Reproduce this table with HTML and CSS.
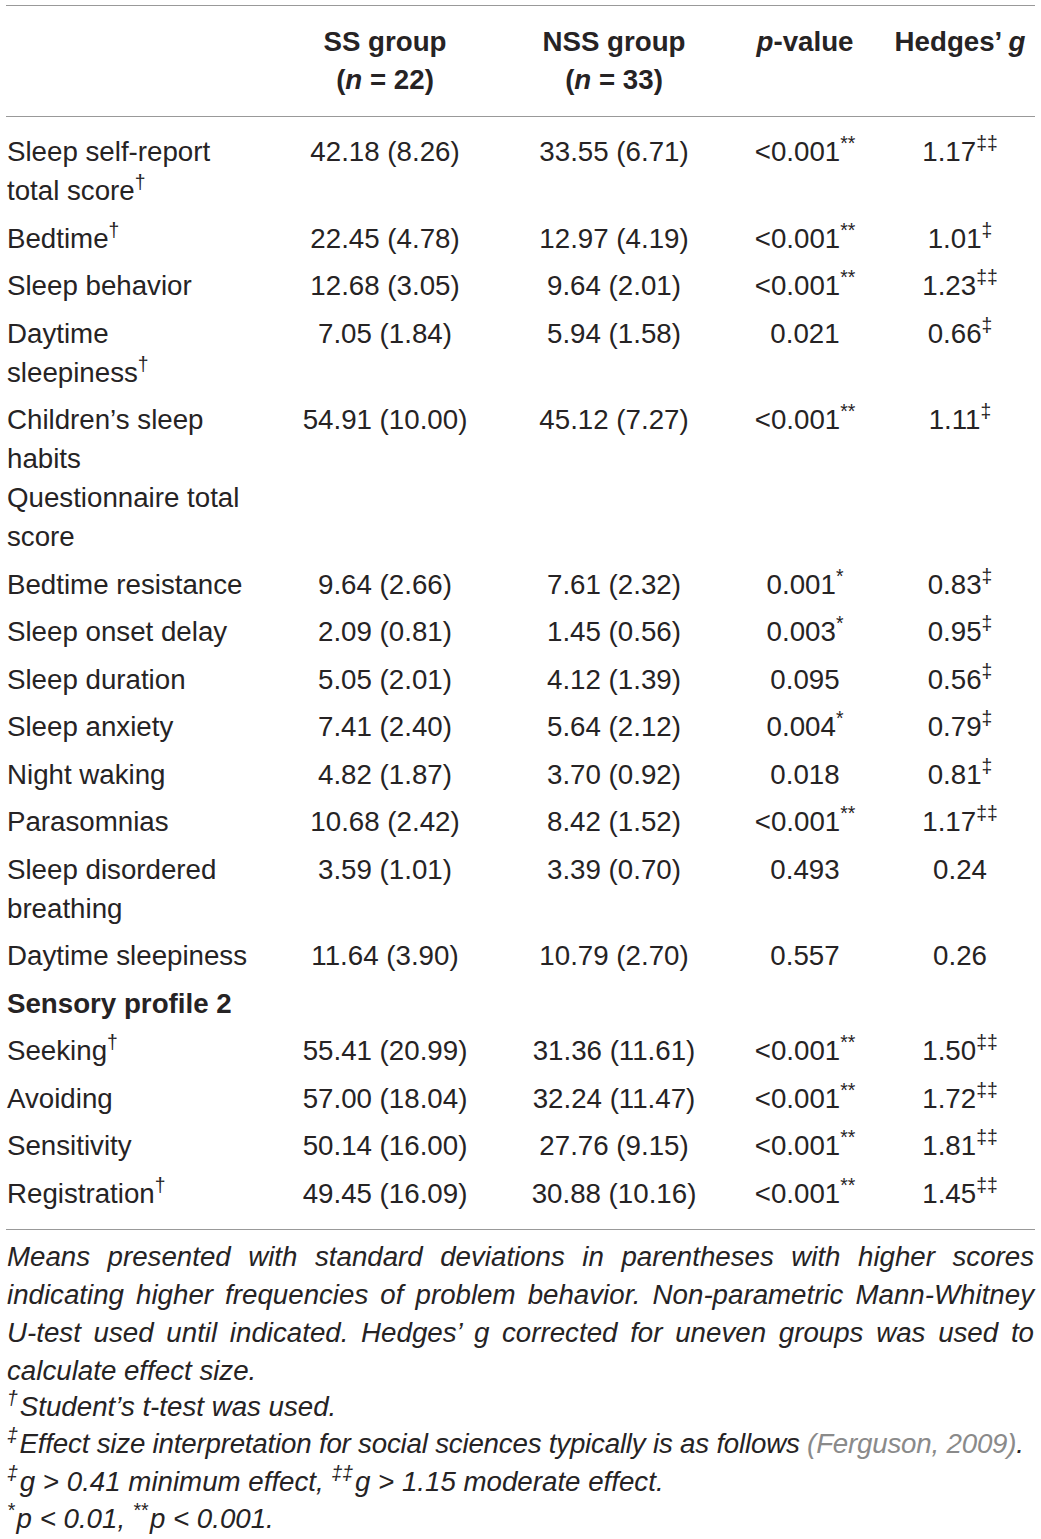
FILE: index.html
```html
<!DOCTYPE html>
<html lang="en">
<head>
    <meta charset="UTF-8">
    <meta name="viewport" content="width=device-width, initial-scale=1.0">
    <title>Sleep and sensory profile comparison</title>
    <link rel="stylesheet" href="styles.css">
</head>
<body>
    <div class="table-wrap">
        <table class="data-table">
            <colgroup>
                <col class="col-label">
                <col class="col-ss">
                <col class="col-nss">
                <col class="col-p">
                <col class="col-g">
            </colgroup>
            <thead>
                <tr>
                    <th></th>
                    <th>SS group<br>(<i>n</i> = 22)</th>
                    <th>NSS group<br>(<i>n</i> = 33)</th>
                    <th><i>p</i>-value</th>
                    <th>Hedges’ <i>g</i></th>
                </tr>
            </thead>
            <tbody>
                <tr>
                    <td>Sleep self-report<br>total score<sup>†</sup></td>
                    <td>42.18 (8.26)</td>
                    <td>33.55 (6.71)</td>
                    <td>&lt;0.001<sup>**</sup></td>
                    <td>1.17<sup>‡‡</sup></td>
                </tr>
                <tr>
                    <td>Bedtime<sup>†</sup></td>
                    <td>22.45 (4.78)</td>
                    <td>12.97 (4.19)</td>
                    <td>&lt;0.001<sup>**</sup></td>
                    <td>1.01<sup>‡</sup></td>
                </tr>
                <tr>
                    <td>Sleep behavior</td>
                    <td>12.68 (3.05)</td>
                    <td>9.64 (2.01)</td>
                    <td>&lt;0.001<sup>**</sup></td>
                    <td>1.23<sup>‡‡</sup></td>
                </tr>
                <tr>
                    <td>Daytime<br>sleepiness<sup>†</sup></td>
                    <td>7.05 (1.84)</td>
                    <td>5.94 (1.58)</td>
                    <td>0.021</td>
                    <td>0.66<sup>‡</sup></td>
                </tr>
                <tr>
                    <td>Children’s sleep<br>habits<br>Questionnaire total<br>score</td>
                    <td>54.91 (10.00)</td>
                    <td>45.12 (7.27)</td>
                    <td>&lt;0.001<sup>**</sup></td>
                    <td>1.11<sup>‡</sup></td>
                </tr>
                <tr>
                    <td>Bedtime resistance</td>
                    <td>9.64 (2.66)</td>
                    <td>7.61 (2.32)</td>
                    <td>0.001<sup>*</sup></td>
                    <td>0.83<sup>‡</sup></td>
                </tr>
                <tr>
                    <td>Sleep onset delay</td>
                    <td>2.09 (0.81)</td>
                    <td>1.45 (0.56)</td>
                    <td>0.003<sup>*</sup></td>
                    <td>0.95<sup>‡</sup></td>
                </tr>
                <tr>
                    <td>Sleep duration</td>
                    <td>5.05 (2.01)</td>
                    <td>4.12 (1.39)</td>
                    <td>0.095</td>
                    <td>0.56<sup>‡</sup></td>
                </tr>
                <tr>
                    <td>Sleep anxiety</td>
                    <td>7.41 (2.40)</td>
                    <td>5.64 (2.12)</td>
                    <td>0.004<sup>*</sup></td>
                    <td>0.79<sup>‡</sup></td>
                </tr>
                <tr>
                    <td>Night waking</td>
                    <td>4.82 (1.87)</td>
                    <td>3.70 (0.92)</td>
                    <td>0.018</td>
                    <td>0.81<sup>‡</sup></td>
                </tr>
                <tr>
                    <td>Parasomnias</td>
                    <td>10.68 (2.42)</td>
                    <td>8.42 (1.52)</td>
                    <td>&lt;0.001<sup>**</sup></td>
                    <td>1.17<sup>‡‡</sup></td>
                </tr>
                <tr>
                    <td>Sleep disordered<br>breathing</td>
                    <td>3.59 (1.01)</td>
                    <td>3.39 (0.70)</td>
                    <td>0.493</td>
                    <td>0.24</td>
                </tr>
                <tr>
                    <td>Daytime sleepiness</td>
                    <td>11.64 (3.90)</td>
                    <td>10.79 (2.70)</td>
                    <td>0.557</td>
                    <td>0.26</td>
                </tr>
                <tr class="section-row">
                    <td><b>Sensory profile 2</b></td>
                    <td></td>
                    <td></td>
                    <td></td>
                    <td></td>
                </tr>
                <tr>
                    <td>Seeking<sup>†</sup></td>
                    <td>55.41 (20.99)</td>
                    <td>31.36 (11.61)</td>
                    <td>&lt;0.001<sup>**</sup></td>
                    <td>1.50<sup>‡‡</sup></td>
                </tr>
                <tr>
                    <td>Avoiding</td>
                    <td>57.00 (18.04)</td>
                    <td>32.24 (11.47)</td>
                    <td>&lt;0.001<sup>**</sup></td>
                    <td>1.72<sup>‡‡</sup></td>
                </tr>
                <tr>
                    <td>Sensitivity</td>
                    <td>50.14 (16.00)</td>
                    <td>27.76 (9.15)</td>
                    <td>&lt;0.001<sup>**</sup></td>
                    <td>1.81<sup>‡‡</sup></td>
                </tr>
                <tr>
                    <td>Registration<sup>†</sup></td>
                    <td>49.45 (16.09)</td>
                    <td>30.88 (10.16)</td>
                    <td>&lt;0.001<sup>**</sup></td>
                    <td>1.45<sup>‡‡</sup></td>
                </tr>
            </tbody>
        </table>

        <div class="table-notes">
            <p class="note-main">Means presented with standard deviations in parentheses with higher scores indicating higher frequencies of problem behavior. Non-parametric Mann-Whitney U-test used until indicated. Hedges’ g corrected for uneven groups was used to calculate effect size.</p>
            <p class="note"><sup>†</sup>Student’s t-test was used.</p>
            <p class="note note-tight"><sup>‡</sup>Effect size interpretation for social sciences typically is as follows <a href="#" class="ref">(Ferguson, 2009)</a>.</p>
            <p class="note"><sup>‡</sup>g &gt; 0.41 minimum effect, <sup>‡‡</sup>g &gt; 1.15 moderate effect.</p>
            <p class="note"><sup>*</sup>p &lt; 0.01, <sup>**</sup>p &lt; 0.001.</p>
        </div>
    </div>
</body>
</html>
```

FILE: styles.css
```css
* {
    margin: 0;
    padding: 0;
    box-sizing: border-box;
}

body {
    font-family: "Liberation Sans", Arial, sans-serif;
    background: #ffffff;
    color: #262324;
}

.table-wrap {
    margin: 5px 6px 0;
    width: 1029px;
}

/* 表格 */
.data-table {
    width: 100%;
    border-collapse: collapse;
    table-layout: fixed;
    font-size: 27.7px;
}

.col-label { width: 261px; }
.col-ss { width: 236px; }
.col-nss { width: 222px; }
.col-p { width: 160px; }
.col-g { width: 150px; }

.data-table thead tr {
    border-top: 1px solid #999;
    border-bottom: 1px solid #999;
}

.data-table th {
    font-weight: bold;
    line-height: 38px;
    padding: 17px 0 17px;
    text-align: center;
    vertical-align: top;
    white-space: nowrap;
}

.data-table td {
    line-height: 39px;
    padding: 4px 0 4.5px;
    text-align: center;
    vertical-align: top;
    white-space: nowrap;
    font-weight: normal;
}

.data-table td:first-child {
    text-align: left;
    padding-left: 1px;
}

.data-table tbody tr:first-child td {
    padding-top: 15px;
}

.data-table tbody tr:last-child td {
    padding-bottom: 16px;
}

.data-table tbody {
    border-bottom: 1px solid #999;
}

sup {
    font-size: 0.7em;
    line-height: 0;
    vertical-align: 0.55em;
}

/* 表注 */
.table-notes {
    padding: 8px 1px 0;
    font-size: 27.7px;
    font-style: italic;
    line-height: 38px;
}

.note-main {
    text-align: justify;
    margin-bottom: -2px;
}

.note {
    white-space: nowrap;
    line-height: 37.5px;
}

.note sup {
    margin-right: 2px;
}

.note-tight {
    letter-spacing: -0.2px;
}

.ref {
    color: #8a8a8a;
    text-decoration: none;
}
```
